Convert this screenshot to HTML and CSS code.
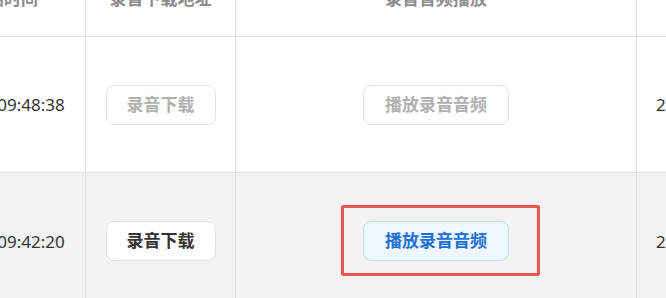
FILE: index.html
```
<!DOCTYPE html>
<html lang="zh-CN">
<head>
    <meta charset="UTF-8">
    <meta name="viewport" content="width=device-width, initial-scale=1.0">
    <title>录音记录</title>
    <link rel="stylesheet" href="styles.css">
</head>
<body>
    <div class="record-table">
        <!-- Header -->
        <div class="cell head head-time">开始时间</div>
        <div class="cell head">录音下载地址</div>
        <div class="cell head">录音音频播放</div>
        <div class="cell head head-last"></div>

        <!-- Row 1 -->
        <div class="cell time">09:48:38</div>
        <div class="cell"><button class="btn btn-disabled">录音下载</button></div>
        <div class="cell"><button class="btn btn-wide btn-disabled">播放录音音频</button></div>
        <div class="cell date">2024-05-21</div>

        <!-- Row 2 (hover) -->
        <div class="cell time row-hover">09:42:20</div>
        <div class="cell row-hover"><button class="btn">录音下载</button></div>
        <div class="cell row-hover">
            <button class="btn btn-wide btn-primary">播放录音音频<span class="highlight"></span></button>
        </div>
        <div class="cell date row-hover">2024-05-21</div>
    </div>
</body>
</html>
```

FILE: styles.css
```
* {
    margin: 0;
    padding: 0;
    box-sizing: border-box;
}

html, body {
    height: 100%;
    overflow: hidden;
}

body {
    background-color: #ffffff;
    font-family: "Noto Sans", "Noto Sans CJK SC", sans-serif;
    color: #333333;
}

.record-table {
    display: grid;
    grid-template-columns: 109px 150px 401px 200px;
    grid-template-rows: 79px 136px 137px;
    margin-left: -23px;
    margin-top: -42px;
}

.cell {
    display: flex;
    align-items: center;
    justify-content: center;
    border-right: 1px solid #e2e2e2;
    border-bottom: 1px solid #e2e2e2;
    font-size: 17px;
    white-space: nowrap;
    overflow: hidden;
}

.head {
    font-weight: bold;
    color: #8c8c8c;
}

.head-time {
    justify-content: flex-end;
    padding-right: 47px;
}

.head-last,
.date {
    border-right: none;
}

.date {
    justify-content: flex-start;
    padding-left: 19px;
}

.row-hover {
    background-color: #f3f3f3;
    overflow: visible;
}

.btn {
    position: relative;
    height: 40px;
    padding: 0 20px;
    border: 1px solid #e0e0e0;
    border-radius: 8px;
    background-color: #ffffff;
    color: #333333;
    font-family: inherit;
    font-size: 17px;
    font-weight: bold;
    line-height: 38px;
    cursor: pointer;
}

.btn-wide {
    padding: 0 21px;
}

.btn-disabled {
    color: #b0b0b0;
    border-color: #e4e4e4;
    cursor: not-allowed;
}

.btn-primary {
    background-color: #eef6ff;
    border-color: #bcd9f7;
    color: #1b6fd6;
}

/* annotation frame around the play button */
.highlight {
    position: absolute;
    left: -23px;
    right: -32px;
    top: -17px;
    bottom: -16px;
    border: 3px solid #f45656;
    border-radius: 2px;
    pointer-events: none;
}
```
